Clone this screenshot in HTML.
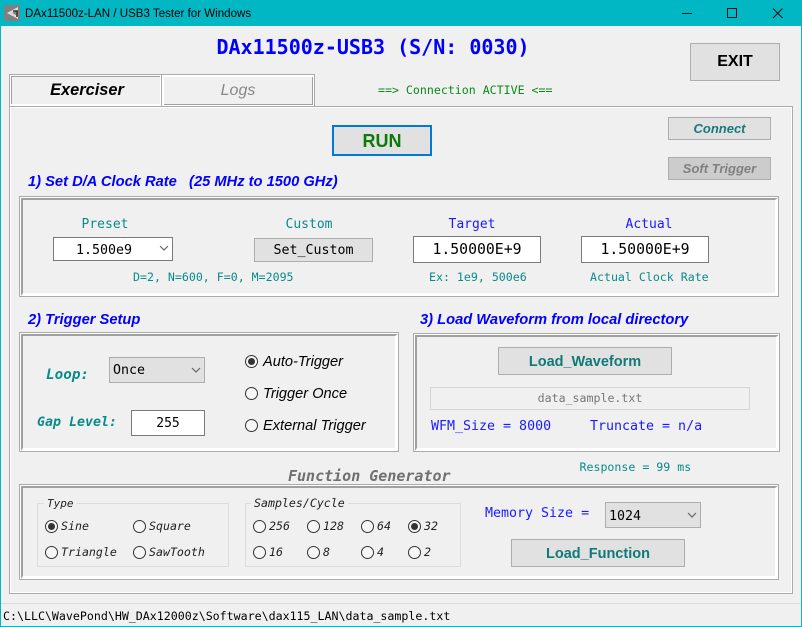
<!DOCTYPE html>
<html><head><meta charset="utf-8"><style>
html,body{margin:0;padding:0;background:#f0f0f0}
#w{position:relative;width:802px;height:627px;overflow:hidden;background:#f0f0f0;font-family:"DejaVu Sans Mono","Liberation Mono",monospace}
#w div,#w span.t{position:absolute;box-sizing:border-box;white-space:pre}
.t{position:absolute;white-space:pre;line-height:18px;height:18px}
.c{text-align:center}
.a{font-family:"Liberation Sans",sans-serif}
.h{font-family:"Liberation Sans",sans-serif;font-weight:bold;font-style:italic;font-size:14.7px;color:#0000ff}
.btn{background:#e1e1e1;border:1px solid #adadad;text-align:center}
.gb{border:1px solid #aaa;background:#fff}
.gb>div{left:1px;top:1px;right:0;bottom:0;background:#f0f0f0;border-style:solid;border-color:#a0a0a0 #fff #fff #a0a0a0;border-width:2px 3px 3px 2px}
.input{background:#fff;border:1px solid #7a7a7a;text-align:center;color:#000}
.fs{border:1px solid #dcdcdc}
.r{width:13px;height:13px;border:1px solid #333;border-radius:50%;background:#f6f6f6}
.r.on::after{content:"";position:absolute;left:2px;top:2px;width:7px;height:7px;border-radius:50%;background:#333}
.teal{color:#0a8a8a}
.s{font-size:11.6px}
.i{font-style:italic}
</style></head><body><div id="w">

<div style="left:0;top:0;width:802px;height:26px;background:#00b7c3"></div>
<div style="left:0;top:26px;width:1px;height:601px;background:#00b7c3"></div>
<div style="right:0;top:26px;width:1px;height:601px;background:#00b7c3"></div>
<div style="left:0;top:626px;width:802px;height:1px;background:#00b7c3"></div>

<svg style="position:absolute;left:4px;top:5px" width="16" height="16" viewBox="0 0 16 16"><rect width="16" height="16" fill="#808080"/><path d="M14 2 L3 8 L14 14 L14 11 L8 8 L14 5Z" fill="#ddd"/><path d="M9 6 L13 6 L13 12" fill="none" stroke="#333" stroke-width="1.5"/></svg>
<span class="t a" style="left:25px;top:5px;font-size:11.55px;color:#000">DAx11500z-LAN / USB3 Tester for Windows</span>
<svg style="position:absolute;left:680px;top:5px" width="122" height="18" viewBox="0 0 122 18"><path d="M2 8.5H12" stroke="#111" stroke-width="1"/><rect x="47.5" y="3.5" width="9" height="9" fill="none" stroke="#111"/><path d="M93 3.5L102.500 13M102.500 3.500L93 13" stroke="#111" fill="none"/></svg>

<span class="t c" style="left:0;top:37px;width:746px;font-size:20px;font-weight:bold;color:#0000ff;line-height:20px;height:20px">DAx11500z-USB3 (S/N: 0030)</span>
<div class="btn a" style="left:690px;top:43px;width:90px;height:38px;font-weight:bold;font-size:16px;line-height:36px;color:#000">EXIT</div>

<div style="left:9px;top:74px;width:306px;height:33px;border:1px solid #aaa;background:#fff"></div>
<div style="left:11px;top:76px;width:149px;height:28px;border-top:1px solid #a0a0a0;border-left:1px solid #a0a0a0;background:#f0f0f0"></div>
<div style="left:161px;top:74px;width:1px;height:32px;background:#aaa"></div>
<div style="left:164px;top:77px;width:149px;height:28px;border-right:1px solid #a0a0a0;border-bottom:1px solid #a0a0a0;background:#f0f0f0"></div>
<span class="t a c" style="left:11px;top:81px;width:152px;font-size:16.4px;font-weight:bold;font-style:italic;color:#000">Exerciser</span>
<span class="t a c" style="left:163px;top:82px;width:150px;font-size:16px;font-style:italic;color:#888">Logs</span>
<span class="t s" style="left:378px;top:81px;color:#0a8a1a">==&gt; Connection ACTIVE &lt;==</span>

<div style="left:9px;top:106px;width:784px;height:488px;border:1px solid #aaa;background:#f0f0f0;box-shadow:inset 0 0 0 1px #fff"></div>

<div class="btn a" style="left:332px;top:125px;width:100px;height:31px;border:2px solid #0078d7;font-weight:bold;font-size:18px;line-height:29px;color:#0a7a0a">RUN</div>
<div class="btn a" style="left:668px;top:117px;width:103px;height:23px;font-weight:bold;font-style:italic;font-size:13px;line-height:21px;color:#1a7a7a">Connect</div>
<div class="btn a" style="left:668px;top:157px;width:103px;height:23px;background:#cccccc;font-weight:bold;font-style:italic;font-size:13px;line-height:21px;color:#808080">Soft Trigger</div>

<span class="t h" style="left:28px;top:173px">1) Set D/A Clock Rate   (25 MHz to 1500 GHz)</span>

<div class="gb" style="left:19px;top:196px;width:760px;height:101px"><div></div></div>
<span class="t c teal" style="left:60px;top:216px;width:90px;font-size:13px">Preset</span>
<span class="t c teal" style="left:264px;top:216px;width:90px;font-size:13px">Custom</span>
<span class="t c" style="left:427px;top:216px;width:90px;font-size:13px;color:#1a1aff">Target</span>
<span class="t c" style="left:604px;top:216px;width:90px;font-size:13px;color:#1a1aff">Actual</span>

<div class="input" style="left:53px;top:237px;width:120px;height:24px"></div>
<span class="t" style="left:76px;top:242px;font-size:13.3px;color:#000">1.500e9</span>
<svg style="position:absolute;left:159px;top:245px" width="10" height="7"><path d="M1 1L5 5L9 1" fill="none" stroke="#666" stroke-width="1.2"/></svg>

<div class="btn" style="left:254px;top:238px;width:119px;height:24px;font-size:13.3px;line-height:24px;color:#000">Set_Custom</div>
<div class="input" style="left:413px;top:236px;width:128px;height:27px;font-size:14.8px;line-height:26px">1.50000E+9</div>
<div class="input" style="left:581px;top:236px;width:128px;height:27px;font-size:14.8px;line-height:26px">1.50000E+9</div>

<span class="t s teal" style="left:133px;top:268px">D=2, N=600, F=0, M=2095</span>
<span class="t s teal" style="left:429px;top:268px">Ex: 1e9, 500e6</span>
<span class="t s teal" style="left:590px;top:268px">Actual Clock Rate</span>

<span class="t h" style="left:28px;top:311px">2) Trigger Setup</span>
<span class="t h" style="left:420px;top:311px">3) Load Waveform from local directory</span>

<div class="gb" style="left:19px;top:332px;width:380px;height:120px"><div></div></div>
<span class="t teal" style="left:46px;top:366px;font-size:14.3px;font-weight:bold;font-style:italic">Loop:</span>
<span class="t teal" style="left:37px;top:414px;font-size:13.3px;font-weight:bold;font-style:italic">Gap Level:</span>
<div style="left:109px;top:357px;width:96px;height:26px;background:#e1e1e1;border:1px solid #adadad"></div>
<span class="t" style="left:113px;top:362px;font-size:13.3px;color:#000">Once</span>
<svg style="position:absolute;left:191px;top:367px" width="10" height="7"><path d="M1 1L5 5L9 1" fill="none" stroke="#666" stroke-width="1.2"/></svg>
<div class="input" style="left:131px;top:410px;width:74px;height:26px;font-size:13px;line-height:26px">255</div>

<div class="r on" style="left:245px;top:355px"></div>
<div class="r" style="left:245px;top:387px"></div>
<div class="r" style="left:245px;top:419px"></div>
<span class="t a i" style="left:263px;top:353px;font-size:14.6px;color:#000">Auto-Trigger</span>
<span class="t a i" style="left:263px;top:385px;font-size:14.6px;color:#000">Trigger Once</span>
<span class="t a i" style="left:263px;top:417px;font-size:14.6px;color:#000">External Trigger</span>

<div class="gb" style="left:413px;top:333px;width:367px;height:119px"><div></div></div>
<div class="btn a" style="left:498px;top:347px;width:174px;height:28px;font-weight:bold;font-size:14.5px;line-height:28px;color:#0f7a78">Load_Waveform</div>
<div style="left:430px;top:387px;width:320px;height:23px;border:1px solid #d4d4d4"></div>
<span class="t s c" style="left:430px;top:389px;width:320px;color:#777">data_sample.txt</span>
<span class="t" style="left:431px;top:418px;font-size:13.3px;color:#1a1aff">WFM_Size = 8000</span>
<span class="t" style="left:590px;top:418px;font-size:13.3px;color:#1a1aff">Truncate = n/a</span>
<span class="t s teal" style="left:579.5px;top:458px">Response = 99 ms</span>

<span class="t" style="left:288px;top:467px;font-size:15px;font-weight:bold;font-style:italic;color:#707070">Function Generator</span>

<div class="gb" style="left:19px;top:484px;width:760px;height:96px"><div></div></div>
<div class="fs" style="left:37px;top:503px;width:192px;height:64px"></div>
<div class="fs" style="left:245px;top:503px;width:216px;height:64px"></div>
<span class="t i" style="left:44px;top:495px;font-size:11px;background:#f0f0f0;padding:0 3px;color:#222">Type</span>
<span class="t i s" style="left:251px;top:494px;background:#f0f0f0;padding:0 3px;color:#222">Samples/Cycle</span>

<div class="r on" style="left:45px;top:520px"></div><span class="t i s" style="left:61px;top:517px;color:#222">Sine</span>
<div class="r" style="left:133px;top:520px"></div><span class="t i s" style="left:149px;top:517px;color:#222">Square</span>
<div class="r" style="left:45px;top:546px"></div><span class="t i s" style="left:61px;top:543px;color:#222">Triangle</span>
<div class="r" style="left:133px;top:546px"></div><span class="t i s" style="left:149px;top:543px;color:#222">SawTooth</span>

<div class="r" style="left:253px;top:520px"></div><span class="t i s" style="left:269px;top:517px;color:#222">256</span>
<div class="r" style="left:307px;top:520px"></div><span class="t i s" style="left:323px;top:517px;color:#222">128</span>
<div class="r" style="left:361px;top:520px"></div><span class="t i s" style="left:377px;top:517px;color:#222">64</span>
<div class="r on" style="left:408px;top:520px"></div><span class="t i s" style="left:424px;top:517px;color:#222">32</span>
<div class="r" style="left:253px;top:546px"></div><span class="t i s" style="left:269px;top:543px;color:#222">16</span>
<div class="r" style="left:307px;top:546px"></div><span class="t i s" style="left:323px;top:543px;color:#222">8</span>
<div class="r" style="left:361px;top:546px"></div><span class="t i s" style="left:377px;top:543px;color:#222">4</span>
<div class="r" style="left:408px;top:546px"></div><span class="t i s" style="left:424px;top:543px;color:#222">2</span>

<span class="t" style="left:485px;top:505px;font-size:13.3px;color:#1a1aff">Memory Size =</span>
<div style="left:605px;top:502px;width:96px;height:26px;background:#e1e1e1;border:1px solid #adadad"></div>
<span class="t" style="left:609px;top:508px;font-size:13.3px;color:#000">1024</span>
<svg style="position:absolute;left:687px;top:512px" width="10" height="7"><path d="M1 1L5 5L9 1" fill="none" stroke="#666" stroke-width="1.2"/></svg>
<div class="btn a" style="left:511px;top:539px;width:174px;height:28px;font-weight:bold;font-size:14.5px;line-height:28px;color:#0f7a78">Load_Function</div>

<div style="left:1px;top:603px;width:800px;height:1px;background:#dcdcdc"></div>
<span class="t" style="left:3px;top:607px;font-size:11.62px;color:#000">C:\LLC\WavePond\HW_DAx12000z\Software\dax115_LAN\data_sample.txt</span>
</div></body></html>
